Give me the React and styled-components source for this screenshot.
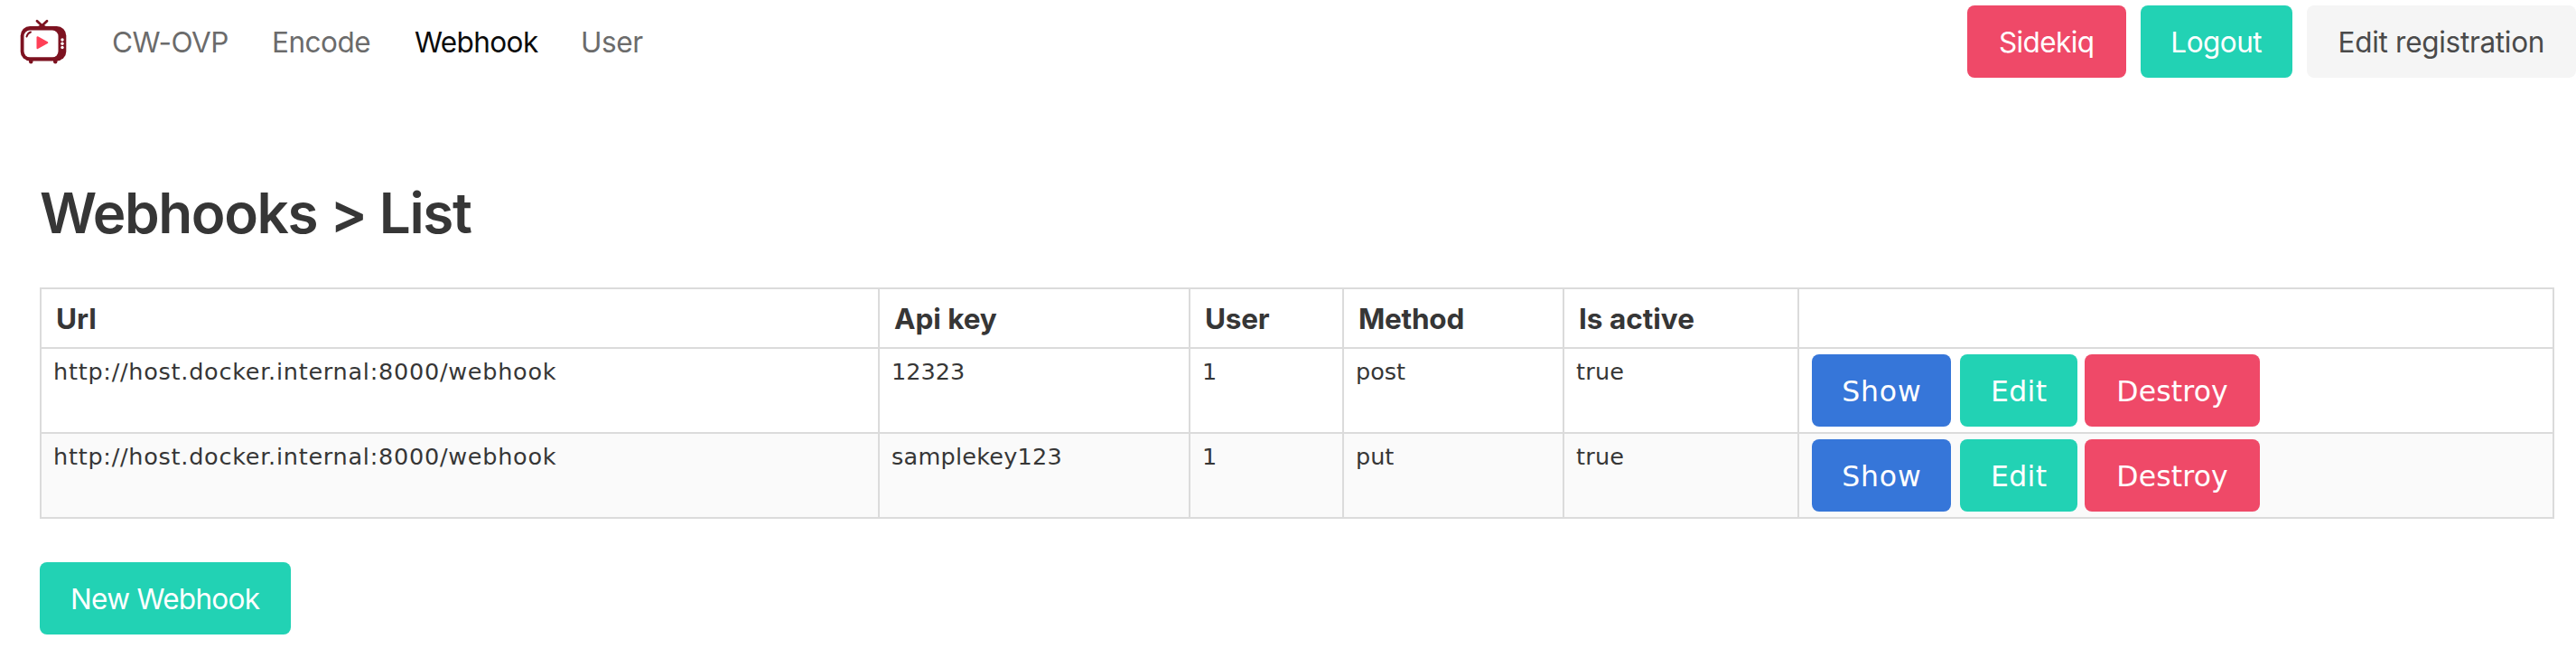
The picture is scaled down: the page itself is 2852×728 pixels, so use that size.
import React from 'react';
import styled, { createGlobalStyle } from 'styled-components';

const Global = createGlobalStyle`
  *, *::before, *::after { box-sizing: border-box; }
  body { margin: 0; background: #fff; color: #363636; font-family: Inter, sans-serif; font-size: 32px; }
  h1 { margin: 0; }
`;
const tones = {
  danger: ['#ef4968', '#fff'],
  primary: ['#22d2b4', '#fff'],
  link: ['#3676d9', '#fff'],
  light: ['#f5f5f5', '#4a4a4a'],
};
const Fit = styled.span`
  display: inline-block;
  white-space: nowrap;
  letter-spacing: ${(p) => p.$ls || 0}px;
  margin-right: ${(p) => -(p.$ls || 0)}px;
`;
const Button = styled.a`
  display: inline-flex;
  align-items: center;
  justify-content: center;
  flex: none;
  width: ${(p) => p.$w}px;
  height: 80px;
  padding-top: 1px;
  border-radius: 8px;
  background: ${(p) => tones[p.$tone][0]};
  color: ${(p) => tones[p.$tone][1]};
  font-family: ${(p) => (p.$wide ? '"DejaVu Sans"' : 'Inter')}, sans-serif;
  font-size: 31.5px;
  line-height: 48px;
`;
const Navbar = styled.nav`
  display: flex;
  align-items: center;
  height: 92px;
`;
const Brand = styled.a`
  display: flex;
  width: 124px;
  padding-left: 20px;
`;
const NavLinks = styled.div`
  display: flex;
  flex: 1;
  padding-top: 1px;
`;
const NavLink = styled.a`
  width: ${(p) => p.$w}px;
  font-size: 31.5px;
  line-height: 48px;
  white-space: nowrap;
  color: ${(p) => (p.$active ? '#0a0a0a' : '#6b6b6b')};
`;
const NavButtons = styled.div`
  display: flex;
  gap: 16px;
`;
const Main = styled.main`
  padding: 108px 24px 0 44px;
`;
const Title = styled.h1`
  font-size: 62px;
  font-weight: 600;
  line-height: 72px;
  margin-bottom: 46px;
`;
const Table = styled.table`
  width: 2784px;
  table-layout: fixed;
  border-collapse: separate;
  border-spacing: 0;
  border-top: 2px solid #dbdbdb;
  border-left: 2px solid #dbdbdb;
`;
const Th = styled.th`
  height: 66px;
  padding: 2px 16px 0;
  border-right: 2px solid #dbdbdb;
  border-bottom: 2px solid #dbdbdb;
  text-align: left;
  font-size: 31.5px;
  font-weight: 700;
  line-height: 48px;
`;
const Row = styled.tr`
  background: ${(p) => (p.$striped ? '#fafafa' : '#fff')};
`;
const Td = styled.td`
  height: 94px;
  padding: 6px 13px 0;
  border-right: 2px solid #dbdbdb;
  border-bottom: 2px solid #dbdbdb;
  vertical-align: top;
  font-family: "DejaVu Sans", sans-serif;
  font-size: 25.5px;
  line-height: 39px;
`;
const Actions = styled.div`
  display: flex;
  gap: 8px;
  padding-left: 1px;

  ${Button}:first-child {
    margin-right: 2px;
  }
`;
const Footer = styled.div`
  display: flex;
  margin-top: 48px;
`;

const Logo = () => (
  <svg width="56" height="56" viewBox="0 0 56 56">
    <path d="M21 5.200l9 8.500M32 5.200l-9 8.500" stroke="#7d1220" strokeWidth="2.800" strokeLinecap="round" />
    <path d="M20 12l6.500-3.200L33 12zM12 48h4.500v2.200a2.200 2.200 0 0 1-4.500 0zM39 48h4.500v2.200a2.200 2.200 0 0 1-4.500 0z" fill="#7d1220" />
    <rect x="2.700" y="11" width="50.600" height="38.400" rx="10.500" fill="#7d1220" />
    <rect x="6.500" y="15.600" width="38" height="29.700" rx="6.500" fill="#fff" />
    <path d="M9.500 22.500c.7-2.500 2.200-4.200 4.500-5" fill="none" stroke="#7d1220" strokeWidth="2" strokeLinecap="round" />
    <path d="M21.500 23.200v12L32.300 29.200z" fill="#ff4057" stroke="#ff4057" strokeWidth="2" strokeLinejoin="round" />
    <circle cx="49" cy="26" r="1.700" fill="#fff" />
    <circle cx="49" cy="30.200" r="1.700" fill="#fff" />
    <circle cx="49" cy="34.500" r="1.700" fill="#fff" />
  </svg>
);

const columns = [
  ['Url', 928, -0.1], ['Api key', 344, -0.05], ['User', 170, -0.2], ['Method', 244, -0.25], ['Is active', 260, 0], ['', 836, 0],
];
const URL_TEXT = 'http://host.docker.internal:8000/webhook';
const rows = [
  [[URL_TEXT, 0.74], ['12323', 0], ['1', 0], ['post', 0], ['true', 0.2]],
  [[URL_TEXT, 0.74], ['samplekey123', 0.25], ['1', 0], ['put', 0], ['true', 0.2]],
];

export default function App() {
  return (
    <>
      <Global />
      <Navbar>
        <Brand><Logo /></Brand>
        <NavLinks>
          <NavLink $w={177}><Fit $ls={-0.5}>CW-OVP</Fit></NavLink>
          <NavLink $w={158}><Fit $ls={-0.5}>Encode</Fit></NavLink>
          <NavLink $w={184} $active><Fit $ls={-0.6}>Webhook</Fit></NavLink>
          <NavLink $w={80}><Fit $ls={-0.4}>User</Fit></NavLink>
        </NavLinks>
        <NavButtons>
          <Button $tone="danger" $w={176}><Fit $ls={-0.6}>Sidekiq</Fit></Button>
          <Button $tone="primary" $w={168}><Fit $ls={-0.5}>Logout</Fit></Button>
          <Button $tone="light" $w={298}><Fit $ls={-0.3}>Edit registration</Fit></Button>
        </NavButtons>
      </Navbar>
      <Main>
        <Title><Fit $ls={-1.4}>{'Webhooks > List'}</Fit></Title>
        <Table>
          <colgroup>{columns.map(([name, width]) => <col key={name} width={width} />)}</colgroup>
          <thead>
            <tr>{columns.map(([name, , ls]) => <Th key={name}><Fit $ls={ls}>{name}</Fit></Th>)}</tr>
          </thead>
          <tbody>
            {rows.map((cells, i) => (
              <Row key={i} $striped={i % 2 === 1}>
                {cells.map(([text, ls], j) => <Td key={j}><Fit $ls={ls}>{text}</Fit></Td>)}
                <Td>
                  <Actions>
                    <Button $wide $tone="link" $w={154}><Fit $ls={0.8}>Show</Fit></Button>
                    <Button $wide $tone="primary" $w={130}><Fit $ls={0.4}>Edit</Fit></Button>
                    <Button $wide $tone="danger" $w={194}><Fit $ls={0.15}>Destroy</Fit></Button>
                  </Actions>
                </Td>
              </Row>
            ))}
          </tbody>
        </Table>
        <Footer>
          <Button $tone="primary" $w={278}><Fit $ls={-0.7}>New Webhook</Fit></Button>
        </Footer>
      </Main>
    </>
  );
}
